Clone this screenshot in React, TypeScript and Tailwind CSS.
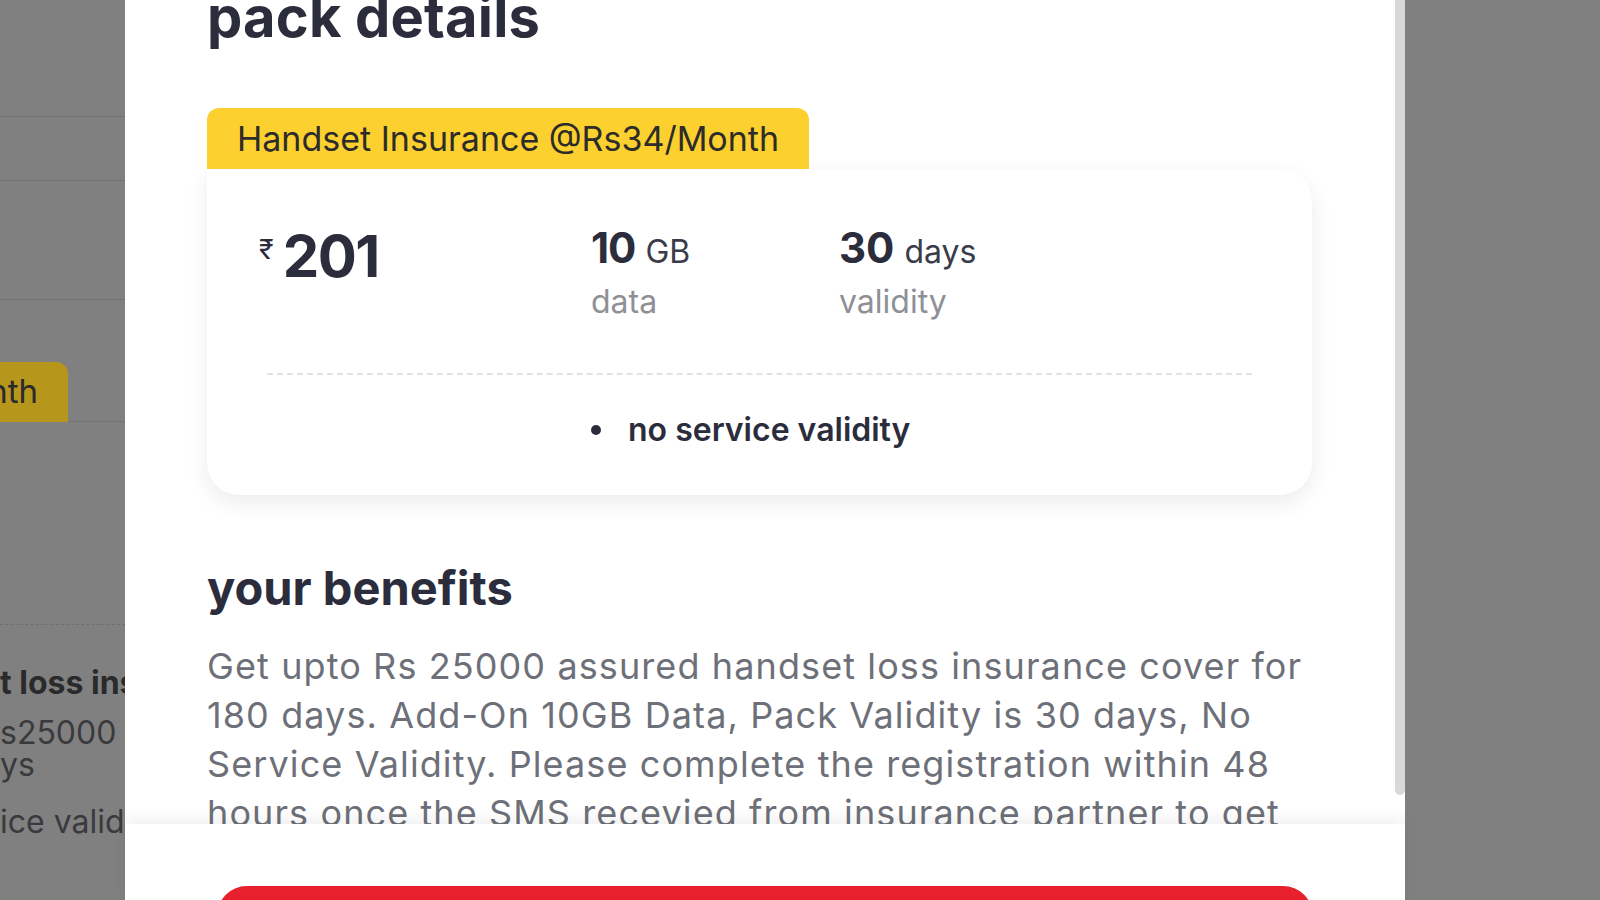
import { Fragment } from 'react'

const features = ['no service validity']

const benefits =
  'Get upto Rs 25000 assured handset loss insurance cover for 180 days. Add-On 10GB Data, Pack Validity is 30 days, No Service Validity. Please complete the registration within 48 hours once the SMS recevied from insurance partner to get'

// strip of the plan list that stays visible behind the sheet
function DimmedList() {
  return (
    <div className="w-[125px] shrink-0 overflow-hidden bg-[#808080] text-[#2a2a2c]">
      <div className="h-[117px] border-b border-[#737373]" />
      <div className="h-[64px] border-b border-[#737373]" />
      <div className="h-[119px] border-b border-[#737373]" />
      <div className="h-[62px]" />
      <div className="flex h-[60px]">
        <div className="flex w-[68px] shrink-0 items-center justify-end overflow-hidden rounded-tr-[12px] bg-[#b7961c] pr-[30px] text-[33px] whitespace-nowrap">
          nth
        </div>
        <div className="flex-1 border-b border-[#737373]" />
      </div>
      <div className="h-[203px] border-b border-dashed border-[#6f6f6f]" />
      <div className="mt-[38px] text-[32px] leading-[40px] font-bold whitespace-nowrap">t loss insurance</div>
      <div className="mt-[14px] text-[32px] leading-[32px] text-[#3a3a3c] whitespace-nowrap">
        s25000 I
        <br />
        ys
      </div>
      <div className="mt-[21px] text-[32px] leading-[40px] text-[#3a3a3c] whitespace-nowrap">ice validity</div>
    </div>
  )
}

export default function App() {
  return (
    <div className="flex h-[900px] w-[1600px] overflow-hidden bg-[#808080] font-[Inter,'Noto_Sans',sans-serif]">
      <DimmedList />

      {/* Bottom sheet */}
      <div className="flex w-[1280px] shrink-0 flex-col bg-white">
        <div className="relative flex-1 overflow-hidden">
          <div className="pl-[82px] pr-[93px]">
            <h2 className="mt-[-11px] text-[56px] leading-[56px] font-bold tracking-[0.2px] text-[#2b2d3c]">pack details</h2>

            {/* Pack card */}
            <div className="mt-[63px]">
              <div className="inline-flex h-[61px] items-center rounded-t-[12px] bg-[#fcd12f] px-[30px] text-[34px] text-[#2d2c2a]">
                Handset Insurance @Rs34/Month
              </div>
              <div className="rounded-[32px] rounded-tl-none bg-white px-[52px] pt-[55px] pb-[45px] shadow-[0_8px_22px_rgba(0,0,0,0.08)]">
                <div className="flex items-start text-[#2b2d3c]">
                  <div className="flex w-[332px] shrink-0 items-start pt-[4px]">
                    <span className="mt-[8px] text-[27px] leading-none">₹</span>
                    <span className="ml-[9px] text-[58px] leading-[56px] font-bold tracking-[-1.5px]">201</span>
                  </div>
                  <div className="mt-[3px] w-[248px] shrink-0">
                    <div className="leading-[42px]">
                      <span className="text-[42px] font-bold tracking-[-1px]">10</span>
                      <span className="ml-[10px] text-[32px] text-[#3a3c4a]">GB</span>
                    </div>
                    <div className="mt-[4px] text-[32px] leading-[40px] text-[#8e9096]">data</div>
                  </div>
                  <div className="mt-[3px]">
                    <div className="leading-[42px]">
                      <span className="text-[42px] font-bold">30</span>
                      <span className="ml-[10px] text-[32px] text-[#3a3c4a]">days</span>
                    </div>
                    <div className="mt-[4px] text-[32px] leading-[40px] text-[#8e9096]">validity</div>
                  </div>
                </div>

                <div className="mx-[8px] mt-[51px] border-t-2 border-dashed border-[#e2e2e2]" />

                <ul className="mt-[35px] pl-[332px]">
                  {features.map((f) => (
                    <li key={f} className="flex items-center gap-[27px] text-[32px] leading-[40px] font-semibold text-[#2b2d3c]">
                      <span className="h-[10px] w-[10px] rounded-full bg-[#2b2d3c]" />
                      {f}
                    </li>
                  ))}
                </ul>
              </div>
            </div>

            <h3 className="mt-[65px] text-[47px] leading-[56px] font-bold text-[#2b2d3c]">your benefits</h3>
            <p className="mt-[26px] text-[36px] leading-[49px] tracking-[1.1px] text-[#6d7078]">
              {benefits.split('\n').map((line, i) => (
                <Fragment key={i}>{line}</Fragment>
              ))}
            </p>
          </div>

          {/* scrollbar thumb */}
          <div className="absolute top-0 right-0 h-[795px] w-[10px] rounded-b-full bg-[#d7d8d8]" />
        </div>

        {/* Sticky footer with the buy button */}
        <div className="relative z-10 h-[76px] shrink-0 bg-white px-[92px] pt-[62px] shadow-[0_-6px_14px_rgba(0,0,0,0.06)]">
          <button className="h-[60px] w-full rounded-[32px] bg-[#e8202d] text-[32px] font-semibold text-white">Buy now</button>
        </div>
      </div>

      <div className="flex-1 bg-[#808080]" />
    </div>
  )
}
